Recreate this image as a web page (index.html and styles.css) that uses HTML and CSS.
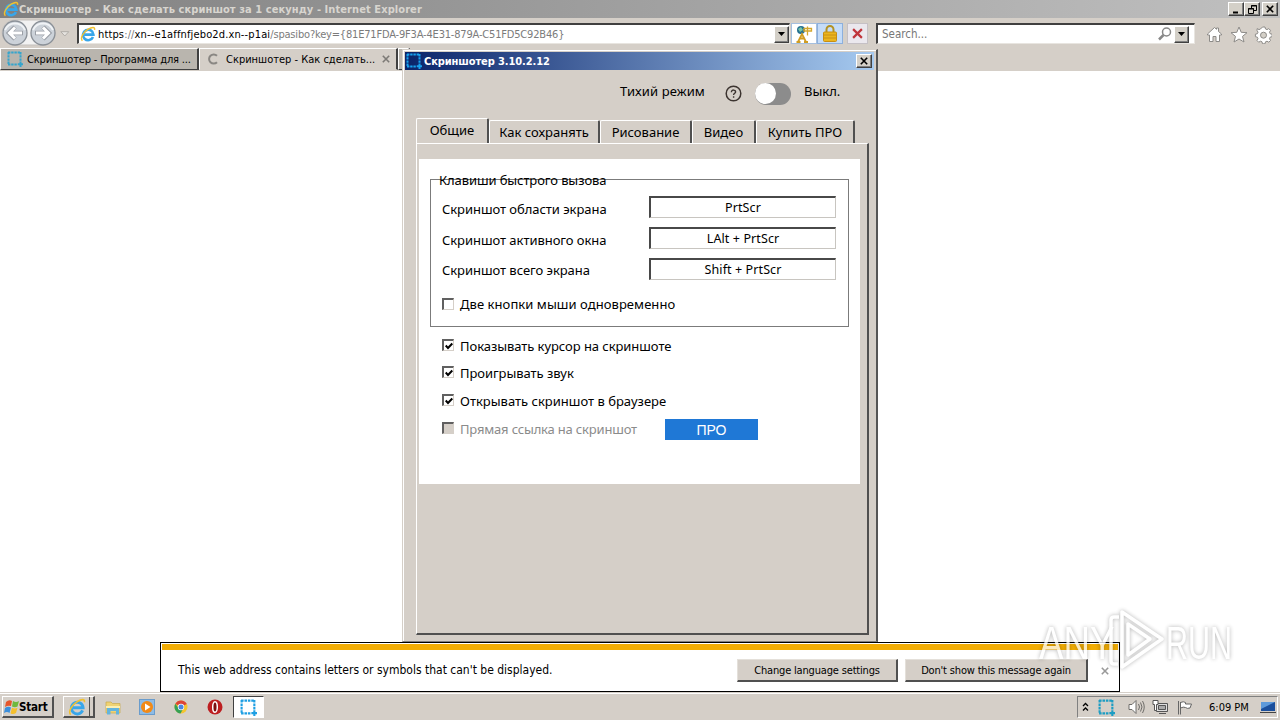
FILE: index.html
```html
<!DOCTYPE html>
<html lang="ru">
<head>
<meta charset="utf-8">
<title>Скриншотер</title>
<link rel="stylesheet" href="styles.css">
</head>
<body>
<svg class="defs" width="0" height="0">
  <symbol id="ie" viewBox="0 0 16 16">
    <path d="M13 11A5.200 5.200 0 1 1 13.400 8.600H4.400" fill="none" stroke="#38a6ea" stroke-width="2.600"/>
    <path d="M2.400 14.800C-.3 12 3.600 6 8.200 3.200 12 .9 15.300.6 14.500 3.800" fill="none" stroke="#f2c12e" stroke-width="1.400"/>
  </symbol>
  <symbol id="crop" viewBox="0 0 16 16">
    <path d="M1 1.500h12.500M1.500 1v12.500M1 13.500h9M13.500 1v9" fill="none" stroke="currentColor" stroke-width="2" stroke-dasharray="2.4 .8"/>
    <path d="M13.500 10.500v5.500M10.700 13.300h5.300" fill="none" stroke="currentColor" stroke-width="2"/>
  </symbol>
  <symbol id="x" viewBox="0 0 8 8"><path d="M.8.8l6.400 6.400M7.200.8L.8 7.200" fill="none" stroke="currentColor" stroke-width="1.600"/></symbol>
</svg>

<header class="titlebar">
  <svg class="i16"><use href="#ie"/></svg>
  <span class="title">Скриншотер - Как сделать скриншот за 1 секунду - Internet Explorer</span>
  <div class="winbtns">
    <b class="wbtn"><svg width="9" height="9"><path d="M1 7.500h5" stroke="#000" stroke-width="2"/></svg></b>
    <b class="wbtn"><svg width="9" height="9" fill="none" stroke="#000"><path d="M3.500 3V.5h5v5H6M3 1h6M.5 3.500h5v5h-5zM0 4h6"/></svg></b>
    <b class="wbtn gap"><svg width="8" height="8"><use href="#x"/></svg></b>
  </div>
</header>

<nav class="toolbar">
  <svg class="backfwd" width="58" height="30">
    <rect x="2" y="2" width="53" height="25" rx="12.500" fill="#f2f2f2" stroke="#c5c1bd"/>
    <g fill="#ccd2d9" stroke="#8a9097" stroke-width="1.300"><circle cx="15" cy="15" r="12"/><circle cx="43" cy="15" r="12"/></g>
    <g fill="none" stroke="#f0f3f6" stroke-width="2"><path d="M5 12a11 11 0 0 1 20 0M33 12a11 11 0 0 1 20 0"/></g>
    <g fill="none" stroke="#9a9fa6" stroke-width="4.500"><path d="M8.500 15H23M15 9l-6 6 6 6M35 15h14.500M43 9l6 6-6 6"/></g>
    <g fill="none" stroke="#fff" stroke-width="3"><path d="M9 15h13M15 9.500L9.500 15l5.500 5.500M36 15h13M43 9.500l5.500 5.500-5.500 5.500"/></g>
  </svg>
  <svg class="hist" width="10" height="6"><path d="M.8.7h8L4.800 5z" fill="#e6e3df" stroke="#b1ada8"/></svg>
  <div class="address">
    <svg class="i16"><use href="#ie"/></svg>
    <span class="url">https<span class="grey">://</span>xn--e1affnfjebo2d.xn--p1ai<span class="grey query">/spasibo?key={81E71FDA-9F3A-4E31-879A-C51FD5C92B46}</span></span>
    <b class="drop"><svg width="7" height="4"><path d="M0 0h7L3.500 4z"/></svg></b>
  </div>
  <div class="abtn white"><svg width="18" height="18"><circle cx="6" cy="5" r="4" fill="#257192"/><path d="M3 4l3-2 2 3-3 2z" fill="#77c6a6"/><path d="M9 3.500h7.500V6H9zM12.500 1.500v9" fill="none" stroke="#d4a62b" stroke-width="1.300"/><path d="M3 17l4-8 4 8M5 13.500h5M1.500 17h4M9 17h4" fill="none" stroke="#d19d22" stroke-width="1.800"/></svg></div>
  <div class="abtn blue"><svg width="14" height="17"><path d="M3.500 8V4.500a3.500 3.500 0 0 1 7 0V8" fill="none" stroke="#b39224" stroke-width="2"/><rect x=".5" y="7" width="13" height="9.500" rx="1" fill="#ebb51e" stroke="#c78e13"/><path d="M1 10h12M1 13h12" stroke="#c99016"/></svg></div>
  <div class="abtn stop"><svg width="11" height="11"><use href="#x"/></svg></div>
  <div class="search"><span>Search...</span>
    <svg width="14" height="14"><circle cx="8.500" cy="5" r="4" fill="#fff" stroke="#888" stroke-width="1.500"/><path d="M5.500 8L1 12.500" stroke="#888" stroke-width="2.500"/></svg>
    <b class="drop"><svg width="7" height="4"><path d="M0 0h7L3.500 4z"/></svg></b>
  </div>
  <svg class="cmds" width="66" height="18" fill="#fff" stroke="#8d8b88">
    <path d="M1.500 8L8.500 1.500l2 1.800V2h2v3.500L15.500 8v1H13.500v6.500h-3.500v-5h-3v5H3.500V9h-2z"/>
    <path d="M33 1l2.200 5.300 5.800.4-4.500 3.700 1.500 5.600-5-3-5 3 1.500-5.600L25 6.700l5.800-.4z"/>
    <path d="M56.500 1h2.500l.5 2 1.500.6 1.800-1 1.700 1.800-1 1.800.6 1.500 2 .5v2.500l-2 .5-.6 1.500 1 1.800-1.700 1.700-1.800-1-1.500.6-.5 2h-2.500l-.5-2-1.500-.6-1.800 1-1.700-1.700 1-1.800-.6-1.500-2-.5V8.200l2-.5.6-1.500-1-1.800L51.200 2.600l1.800 1 1.500-.6z"/>
    <circle cx="57.500" cy="9.200" r="3" fill="#d4d0c8"/>
  </svg>
</nav>

<div class="pagetabs">
  <div class="ptab one"><svg class="i16 cyan"><use href="#crop"/></svg><span class="pt1">Скриншотер - Программа для ...</span></div>
  <div class="ptab two"><svg width="12" height="12"><path d="M10 2.800a4.600 4.600 0 1 0 0 6.400" fill="none" stroke="#8a8783" stroke-width="2"/></svg><span class="pt2">Скриншотер - Как сделать...</span><svg class="px" width="8" height="8"><use href="#x"/></svg></div>
  <div class="ptab new"></div>
</div>

<main class="page"></main>

<section class="dialog">
  <div class="dtitle"><svg class="i16"><use href="#crop"/></svg><span class="dname">Скриншотер 3.10.2.12</span><b class="wbtn"><svg width="8" height="8"><use href="#x"/></svg></b></div>
  <div class="quiet">
    <span class="q1">Тихий режим</span>
    <svg width="17" height="17"><circle cx="8.500" cy="8.500" r="7.300" fill="none" stroke="#3c3430" stroke-width="1.500"/><path d="M6.400 7.200c0-3 4.400-2.600 4.200-.2-.1 1.300-2 1.300-2 3M8.600 11.200v1.500" fill="none" stroke="#3c3430" stroke-width="1.400"/></svg>
    <div class="toggle"><i></i></div>
    <span class="q2">Выкл.</span>
  </div>
  <div class="dtabs">
    <div class="dtab active">Общие</div><div class="dtab t2">Как сохранять</div><div class="dtab t3">Рисование</div><div class="dtab t4">Видео</div><div class="dtab t5">Купить ПРО</div>
  </div>
  <div class="panel">
    <div class="sheet">
      <div class="group">
        <div class="legend">Клавиши быстрого вызова</div>
        <div class="keyrow"><label>Скриншот области экрана</label><div class="field">PrtScr</div></div>
        <div class="keyrow"><label>Скриншот активного окна</label><div class="field">LAlt + PrtScr</div></div>
        <div class="keyrow last"><label>Скриншот всего экрана</label><div class="field">Shift + PrtScr</div></div>
        <div class="check in"><i></i><span class="c0">Две кнопки мыши одновременно</span></div>
      </div>
      <div class="check r1"><i><svg width="8" height="8"><path d="M.7 3.500L3 6 7.300 1.500" fill="none" stroke="#000" stroke-width="2"/></svg></i><span class="c1">Показывать курсор на скриншоте</span></div>
      <div class="check r2"><i><svg width="8" height="8"><path d="M.7 3.500L3 6 7.300 1.500" fill="none" stroke="#000" stroke-width="2"/></svg></i><span class="c2">Проигрывать звук</span></div>
      <div class="check r3"><i><svg width="8" height="8"><path d="M.7 3.500L3 6 7.300 1.500" fill="none" stroke="#000" stroke-width="2"/></svg></i><span class="c3">Открывать скриншот в браузере</span></div>
      <div class="check r4 off"><i></i><span class="c4">Прямая ссылка на скриншот</span><div class="pro">ПРО</div></div>
    </div>
  </div>
</section>

<aside class="notice">
  <div class="stripe"></div>
  <div class="nrow">
    <span class="nmsg">This web address contains letters or symbols that can't be displayed.</span>
    <div class="nbtn n1"><span>Change language settings</span></div>
    <div class="nbtn n2"><span>Don't show this message again</span></div>
    <svg class="nx" width="8" height="8"><use href="#x"/></svg>
  </div>
</aside>

<svg class="mark" width="230" height="80" viewBox="0 0 230 80">
  <g class="marktext" fill="#fff">
    <text transform="translate(9 59) scale(.78 1)">ANY</text>
    <text transform="translate(136 59) scale(.65 1)">RUN</text>
  </g>
  <g fill="none" stroke="#fff" stroke-width="3.500" stroke-linejoin="round">
    <path d="M89 17h-5q-3 0-3 3v41q0 3 3 3h4"/>
    <path d="M92 12v55l40-28z"/>
    <path d="M98 24v31l22-16z"/>
  </g>
</svg>

<footer class="taskbar">
  <div class="start"><svg width="16" height="18"><path d="M3 4q3-3 6-1L8 8Q5 7 2 9z" fill="#e6562b"/><path d="M10 3q3 2 6 0l-1.500 5.500Q12 10 9 8.500z" fill="#6fb93e"/><path d="M2 10q3-2 6-.5L6.500 15Q4 13 1 15z" fill="#3c8fdc"/><path d="M9 9.700q3 1.500 5.500 0L13 15q-3 2-5.500.2z" fill="#f5bf2c"/></svg><span>Start</span></div>
  <div class="task ie"><svg width="18" height="18"><use href="#ie"/></svg></div>
  <div class="ql"><svg width="16" height="16"><path d="M1 3h5l1.500 1.500H15V14H1z" fill="#efd274" stroke="#c9a94b" stroke-width=".7"/><path d="M1 7h14v2H1z" fill="#fbefb2"/><path d="M2 9h12v6.500h-3V12H5.500v3.500H2z" fill="#63b4dd"/></svg></div>
  <div class="ql"><svg width="16" height="16"><rect x=".5" y=".5" width="15" height="15" fill="#8ebce6" stroke="#6a9ccc"/><circle cx="8" cy="8" r="6" fill="#f28a17"/><path d="M6 4.500l5.500 3.500L6 11.500z" fill="#fff"/></svg></div>
  <div class="ql"><svg width="14" height="14"><circle cx="7" cy="7" r="6.500" fill="#f4c52f"/><path d="M7 7L1.300 3.800A6.500 6.500 0 0 1 12.800 4z" fill="#dc4437"/><path d="M1.300 3.800A6.500 6.500 0 0 0 6.500 13.500L9 9 4.500 8z" fill="#35a055"/><circle cx="7" cy="7" r="3.200" fill="#fff"/><circle cx="7" cy="7" r="2.500" fill="#4a86e0"/></svg></div>
  <div class="ql"><svg width="16" height="16"><circle cx="8" cy="8" r="7.500" fill="#bd1e20"/><ellipse cx="8" cy="8" rx="2.300" ry="5.300" fill="#7c0f10" stroke="#fff" stroke-width="1.500"/></svg></div>
  <div class="task crop"><svg width="17" height="17"><use href="#crop"/></svg></div>
  <div class="tray">
    <svg width="7" height="10" fill="none" stroke="#000" stroke-width="1.300"><path d="M1 4l2.500-2.500L6 4M1 8.500L3.500 6 6 8.500"/></svg>
    <svg class="tcrop" width="17" height="17"><use href="#crop"/></svg>
    <svg class="tvol" width="17" height="16" fill="none" stroke="#6f6d6a"><path d="M1 5.500h3l4-4v13l-4-4H1z" fill="#fff"/><path d="M10.500 5q2 3 0 6M12.500 3.500q3 4.500 0 9M14.500 2q3.500 6 0 12"/></svg>
    <svg class="tnet" width="17" height="16" fill="#fff" stroke="#555"><path d="M4.500 4.500h11v8h-11z" fill="#ddd"/><path d="M6.500 6.500h7v4h-7z" fill="#aaa"/><path d="M7 14.500h7M1 1.500h5v4H4.500v6h-2v-6H1z"/></svg>
    <svg class="tflag" width="16" height="15" fill="#fff" stroke="#666"><path d="M1.500 1v13.500M3.500 2v12.500M3.500 2.500q3-1.500 5 0v1.500h6l-1.500 4q-3 1-4.500-.5-2-1-5 .5z"/></svg>
    <span class="clock">6:09 PM</span>
    <svg width="16" height="13"><path d="M1 1h14v9H1z" fill="#1b4f9c"/><path d="M1 1h14L1 8z" fill="#5e9ada"/><path d="M0 11.500h16" stroke="#444"/></svg>
  </div>
</footer>
</body>
</html>
```
FILE: styles.css
```css
* { box-sizing: border-box; }
body {
  margin: 0; width: 1280px; height: 720px; overflow: hidden; position: relative;
  display: flex; flex-direction: column; background: #fff; color: #000;
  font: 11px "DejaVu Sans Condensed", "DejaVu Sans", sans-serif; font-stretch: condensed;
  white-space: nowrap;
}
svg { display: block; flex: none; }
.defs { position: absolute; }
.i16 { width: 16px; height: 16px; }

.titlebar { height: 18px; flex: none; display: flex; align-items: center; padding: 0 2px 0 3px; background: linear-gradient(90deg, #808080, #c0c0c0); color: #d8d5cf; font-weight: bold; }
.title { flex: 1; letter-spacing: .08px; }
.winbtns { display: flex; }
.wbtn { width: 16px; height: 14px; display: flex; align-items: center; justify-content: center; background: #d4d0c8; border: 1px solid; border-color: #fff #404040 #404040 #fff; box-shadow: inset -1px -1px #808080; color: #000; flex: none; }
.wbtn.gap { margin-left: 2px; }

.toolbar { height: 30px; flex: none; display: flex; align-items: flex-start; background: #d5cfc8; }
.hist { margin: 13px 7px 0 2px; }
.address { margin-top: 5px; width: 713px; height: 21px; display: flex; align-items: center; background: #fff; border: 1px solid #e8e5e0; border-top: 2px solid #404040; border-left: 2px solid #404040; padding-left: 1px; }
.url { flex: 1; margin-left: 2px; letter-spacing: .14px; }
.grey { color: #7b7b7b; }
.query { letter-spacing: -.18px; }
.drop { width: 15px; height: 17px; display: flex; align-items: center; justify-content: center; background: #d4d0c8; border: 1px solid; border-color: #fff #404040 #404040 #fff; box-shadow: inset -1px -1px #808080; }
.abtn { margin-top: 5px; height: 21px; width: 26px; display: flex; align-items: center; justify-content: center; border: 1px solid #a5bfdf; }
.abtn.white { margin-left: 1px; background: #fff; }
.abtn.blue { background: #c5dcf8; border-color: #8db0dd; }
.abtn.stop { margin-left: 4px; width: 21px; background: #ebe8ee; border-color: #c5c0c5; color: #c0353c; }
.search { margin: 5px 0 0 8px; width: 319px; height: 21px; display: flex; align-items: center; gap: 2px; padding: 0 5px 0 4px; background: #fff; border: 1px solid #e8e5e0; border-top: 2px solid #404040; border-left: 2px solid #404040; color: #777; font-size: 11.500px; }
.search span { flex: 1; }
.cmds { margin: 8px 0 0 11px; }

.pagetabs { height: 23px; flex: none; display: flex; background: #d5cfc8; }
.ptab { height: 22px; display: flex; align-items: center; border: 1px solid #fff; border-right: 2px solid #404040; border-bottom: 1px solid #404040; }
.ptab.one { width: 199px; padding-left: 6px; background: #b9b5ae; }
.ptab.two { width: 199px; padding-left: 7px; border-bottom-color: #d5cfc8; }
.ptab.new { width: 12px; background: #b9b5ae; }
.cyan { color: #35a5cd; }
.pt1 { margin-left: 4px; letter-spacing: -.15px; }
.pt2 { margin-left: 7px; flex: 1; }
.px { color: #7d7a76; margin-right: 6px; }
.page { flex: 1; background: #fff; }

.dialog { position: absolute; left: 402px; top: 49px; width: 476px; height: 593px; background: #d5cfc8; border: 1px solid #d5cfc8; border-right: 2px solid #555; border-bottom: 1px solid #808080; box-shadow: inset 1px 1px #fff; padding: 2px 2px 0; font-family: "Noto Sans", sans-serif; font-size: 13px; font-stretch: normal; }
.dtitle { height: 18px; display: flex; align-items: center; padding: 0 2px 0 1px; background: linear-gradient(90deg, #0a246a, #a6caf0); color: #18a2ef; }
.dname { flex: 1; margin-left: 2px; color: #fff; font: bold 11px "DejaVu Sans Condensed", sans-serif; letter-spacing: -.1px; }
.quiet { height: 48px; display: flex; align-items: center; padding-left: 215px; }
.quiet svg { margin: -1px 13px 0 0; }
.q1 { width: 105px; margin-top: -7px; letter-spacing: .1px; }
.q2 { margin: -7px 0 0 13px; }
.toggle { width: 36px; height: 22px; border-radius: 11px; background: #8c8c8c; margin-top: -1px; }
.toggle i { display: block; width: 21px; height: 21px; border-radius: 50%; background: #fff; }
.dtabs { height: 25px; margin-left: 11px; display: flex; align-items: flex-end; }
.dtab { height: 23px; line-height: 23px; text-align: center; border: 1px solid #fff; border-right: 2px solid #505050; border-bottom: 0; border-radius: 2px 2px 0 0; }
.dtab.active { width: 73px; height: 25px; }
.t2 { width: 111px; } .t3 { width: 92px; } .t4 { width: 64px; } .t5 { width: 99px; }
.panel { margin-left: 11px; width: 453px; height: 492px; border: 1px solid #fff; border-right: 2px solid #505050; border-bottom: 2px solid #505050; padding: 15px 0 0 2px; }
.sheet { width: 441px; height: 325px; background: #fff; padding: 20px 11px 0; }
.group { height: 148px; border: 1px solid #7b7b7b; padding: 0 12px 0 11px; }
.legend { height: 16px; line-height: 16px; margin: -8px 0 8px -3px; letter-spacing: -.1px; }
.keyrow { height: 31px; display: flex; justify-content: space-between; align-items: flex-start; }
.keyrow label { line-height: 27px; letter-spacing: -.05px; }
.keyrow.last label { line-height: 25px; }
.field { width: 187px; height: 22px; line-height: 19px; border: 1px solid #c8c5c0; border-top: 2px solid #484848; border-left: 2px solid #484848; text-align: center; font-size: 12.500px; letter-spacing: .1px; }
.check { display: flex; align-items: center; height: 18px; }
.check i { width: 12px; height: 12px; margin: -2px 6px 0 0; flex: none; border: 1px solid #d5cfc8; border-top: 2px solid #606060; border-left: 2px solid #606060; display: flex; align-items: center; justify-content: center; }
.check.in { margin-top: 7px; }
.c0 { margin-top: -2px; letter-spacing: .06px; }
.c1, .c2 { letter-spacing: -.06px; }
.r1, .r2, .r3, .r4 { margin-left: 12px; }
.r1 { margin-top: 10px; }
.r2 { margin-top: 9px; }
.r3, .r4 { margin-top: 10px; }
.off { color: #8b8b8b; }
.off i { background: #d5cfc8; }
.off span { width: 205px; letter-spacing: -.18px; }
.pro { width: 93px; height: 21px; line-height: 22px; background: #1f78d6; color: #fff; text-align: center; font-family: "Liberation Sans", Arial, sans-serif; font-size: 14px; }

.notice { position: absolute; left: 160px; top: 642px; width: 960px; height: 50px; border: 1px solid #000; background: #fff; padding: 1px; }
.stripe { height: 6px; background: #f2ad04; }
.nrow { display: flex; align-items: center; height: 41px; padding-left: 16px; }
.nmsg { width: 559px; font-size: 12px; margin-top: -2px; }
.nbtn { height: 23px; display: flex; align-items: center; justify-content: center; background: #d5cfc8; border: 1px solid #e4e0da; border-right: 2px solid #505050; border-bottom: 2px solid #505050; letter-spacing: -.17px; }
.n1 { width: 161px; } .n2 { width: 183px; margin-left: 7px; }
.nx { margin-left: 13px; color: #999; }

.mark { position: absolute; left: 1030px; top: 600px; opacity: .75; filter: drop-shadow(0 0 2px rgba(0,0,0,.4)); }
.marktext { font: 47px "Liberation Sans", sans-serif; }

.taskbar { height: 28px; flex: none; display: flex; align-items: center; background: #d5cfc8; border-top: 1px solid #d5cfc8; box-shadow: inset 0 1px #fff; padding: 1px 2px 0; }
.start { width: 52px; height: 22px; display: flex; align-items: center; font-weight: bold; font-size: 11.500px; letter-spacing: -.2px; border: 1px solid #fff; border-right: 2px solid #505050; border-bottom: 2px solid #505050; }
.task { height: 22px; display: flex; align-items: center; justify-content: center; border: 1px solid #fff; }
.task.ie { margin: 0 1px 0 9px; width: 32px; border-right: 2px solid #505050; border-bottom: 2px solid #505050; box-shadow: inset -3px 0 #d5cfc8, inset -4px 0 #505050; padding-right: 4px; }
.ql { width: 34px; display: flex; justify-content: center; }
.task.crop { margin-left: 1px; width: 31px; background: #fff; color: #1e9fe3; border-top-color: #404040; border-left-color: #404040; }
.tray { margin-left: auto; width: 201px; height: 22px; display: flex; align-items: center; padding-left: 4px; border: 1px solid #fff; border-top-color: #808080; border-left-color: #808080; }
.tcrop { margin-left: 9px; color: #1c9dc3; }
.tvol { margin-left: 13px; }
.tnet { margin-left: 7px; }
.tflag { margin-left: 8px; }
.clock { margin-left: 16px; width: 51px; }
```
